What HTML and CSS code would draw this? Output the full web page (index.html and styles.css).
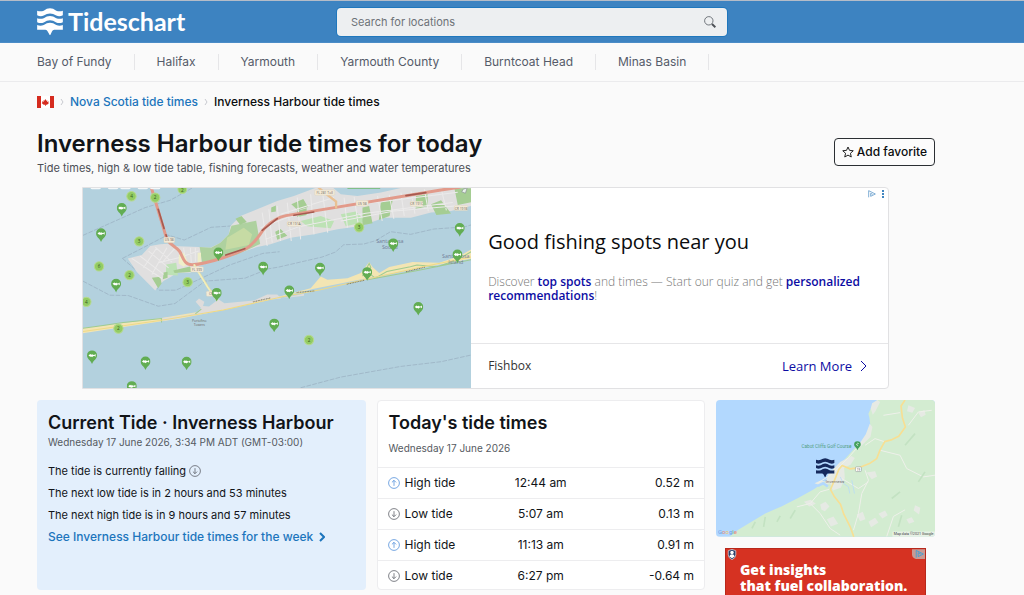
FILE: index.html
```html
<!DOCTYPE html>
<html lang="en">
<head>
    <meta charset="UTF-8">
    <meta name="viewport" content="width=device-width, initial-scale=1.0">
    <title>Inverness Harbour tide times for today</title>
    <link rel="stylesheet" href="styles.css">
</head>
<body>
    <!-- shared icons -->
    <svg class="symbols" aria-hidden="true">
        <symbol id="waves" viewBox="0 0 78 82">
            <path d="M0 8q10 4 20 0Q39-6 58 8q10 4 20 0v14q-10 5-20 1-19-13-38 0-10 4-20-1z"/>
            <path d="M0 31q10 4 20 0 19-14 38 0 10 4 20 0v12q-10 5-20 1-19-13-38 0-10 4-20-1z"/>
            <path d="M0 52q10 4 20 0 19-14 38 0 10 4 20 0v14H52q-5 0-7 5l-5 11h-2l-6-11q-2-5-7-5H0z"/>
        </symbol>
        <symbol id="up" viewBox="0 0 16 16">
            <circle cx="8" cy="8" r="7.2"/>
            <path d="M8 11.8V4.6M5.2 7.2L8 4.4l2.8 2.8"/>
        </symbol>
        <symbol id="down" viewBox="0 0 16 16">
            <circle cx="8" cy="8" r="7.2"/>
            <path d="M8 4.2v7.2M5.2 8.8L8 11.6l2.8-2.8"/>
        </symbol>
        <symbol id="spot" viewBox="-14 -19 28 42">
            <path fill="#62ad53" d="M0 21C-4 10-14 7-14-3a14 14 0 0 1 28 0C14 7 4 10 0 21z"/>
            <path fill="#fff" d="M-10-3l5-4q2 2 4 2l1-2 2 2 4 1 4-3v8l-4-3-4 2-2 2-2-2q-2 0-3 1z"/>
        </symbol>
        <symbol id="adchoices" viewBox="0 0 24 24">
            <path d="M2 2v20M2 2l20 10L8 19v-9l6 3"/>
        </symbol>
    </svg>

    <header class="header">
        <a class="logo" href="#">
            <svg class="logo-icon" aria-hidden="true"><use href="#waves"/></svg>
            <span>Tideschart</span>
        </a>
        <form class="search">
            <input type="search" placeholder="Search for locations" aria-label="Search for locations">
            <button type="submit" aria-label="Search">
                <svg viewBox="0 0 12 12" aria-hidden="true"><circle cx="4.8" cy="4.8" r="4.2"/><path class="handle" d="M8 8l3.4 3.2"/></svg>
            </button>
        </form>
    </header>

    <nav class="places">
        <a href="#">Bay of Fundy</a>
        <a href="#">Halifax</a>
        <a href="#">Yarmouth</a>
        <a href="#">Yarmouth County</a>
        <a href="#">Burntcoat Head</a>
        <a href="#">Minas Basin</a>
    </nav>

    <main class="page">
        <nav class="breadcrumb" aria-label="Breadcrumb">
            <a href="#" aria-label="Canada">
                <svg class="flag" viewBox="0 0 51 36" aria-hidden="true">
                    <path fill="#fff" d="M0 0h51v36H0z"/>
                    <path fill="#d52b1e" d="M0 0h12v36H0zM39 0h12v36H39zM25 9l3 5 3-1-1 5 5-2-1 4 2 1-6 5h-4v4h-2v-4h-4l-6-5 2-1-1-4 5 2-1-5 3 1z"/>
                </svg>
            </a>
            <svg class="sep" viewBox="0 0 4 8" aria-hidden="true"><path d="M1 1l2 3-2 3"/></svg>
            <a href="#">Nova Scotia tide times</a>
            <svg class="sep" viewBox="0 0 4 8" aria-hidden="true"><path d="M1 1l2 3-2 3"/></svg>
            <span>Inverness Harbour tide times</span>
        </nav>

        <div class="title-row">
            <div>
                <h1>Inverness Harbour tide times for today</h1>
                <p class="subtitle">Tide times, high &amp; low tide table, fishing forecasts, weather and water temperatures</p>
            </div>
            <button class="favorite" type="button">
                <svg viewBox="0 0 24 24" aria-hidden="true"><path d="M12 2l3 6.700 7.500.8-5.600 5 1.600 7.500L12 18.200 5.500 22l1.600-7.500-5.600-5L9 8.700z"/></svg>
                Add favorite
            </button>
        </div>

        <section class="fish-ad">
            <svg class="fish-map" viewBox="9 9 1161 603" preserveAspectRatio="xMidYMid slice" role="img" aria-label="Map of fishing spots">
                <path fill="#b3d1de" d="M9 9h1161v603H9z"/>
                <g class="boundary">
                    <path d="M9 153L195 70 270 48 340 9M9 290l80 42 55 1 90 32 50-8 90-67 120-9 70-28 30-5 130-30 40-15 25-22 60-2 35-10 45-27 60 8 70-16 90-6 51-15M660 609l120-32 180-32 120-14 90-20"/>
                    <path d="M127 222l110 95 50 0 160-75 100-35 50-5M127 222l135-70 50 15 80-38 60-4"/>
                </g>
                <!-- mainland -->
                <path fill="#e0dfdf" d="M143 222l42-10 25-27 30-5 22-2 13 7 80 3 35 2 30-15 25-25 5-25 30-30 50-20 60-25 50-15 40-15 30-11h45l25 21 50 5 70-10 70-16h200v56l-60 15-60 5-60 15h-80l-70 25-70 10-70 15-70 10-60 20-40 8-90 30-80 25-30 22h-40l-20 13-18 10-17 15-10 15-20-20-35-35z"/>
                <path fill="#aed19f" d="M358 188l34 2 28-15 25-25 8-26 74-15 12 70-69 31-104 30z"/>
                <path fill="#c6dba4" d="M440 160l50-30 25 20-10 32-70 14z"/>
                <path fill="#bde2b5" d="M258 240l30-5 5 38-36-2zM660 110l60-15 40 15-10 22-70-6zM780 90l45-8 30 30-60 14z"/>
                <path fill="#a5cd93" d="M215 280l25-3 4 20-10 14zM250 264l12-2v18l-14 4zM279 258l50-12 8 16-30 2-24 2zM465 103l18-8 16 18-20 8zM572 70l14-6v18l-14 2zM584 142l16-8 20 20-30 12zM632 60l36-16 14 24-30 10zM650 80l28-8v20l-28 6zM845 70l20-5 10 52-30 6zM900 55l36-10-10 50-32 12zM1005 35l35-5v36l-36 8zM1050 60l30-12 30 40-44 4zM1120 12h50v42l-40 8z"/>
                <g class="streets">
                    <path d="M155 222l90 60M180 215l70 55M205 200l60 50M225 188l50 45M190 250l40-60M215 270l45-80M245 235l45-50M310 190l5 40M330 190l3 45M345 190v42M235 235l60-15 60-20"/>
                    <path d="M545 85l15 100M565 75l10 100M590 65l10 105M620 55l12 115M650 40l10 125M690 30l10 120M725 20l16 125M790 40l10 90M820 38l12 80M890 35l14 75M925 32l14 72M960 25l10 70M990 20l12 68M1030 15l12 66M1080 12l16 66M540 130l80-30 150-36 120-10 240-30M555 165l100-38 200-40 260-32M600 90l160-50M780 110l160-30 200-16"/>
                </g>
                <path fill="#efefc9" d="M296 210l14-5 14 32-14 10-15-10zM352 205h10v34h-10z"/>
                <g fill="none" stroke-linecap="round">
                    <path stroke="#e29a8a" stroke-width="9" d="M213 9l45 150c10 25 30 26 40 42s12 40 38 40c50-3 130-33 160-48s40-45 60-65 40-30 60-34L1075 18l60-9"/>
                    <path stroke="#a65a50" stroke-width="5" stroke-dasharray="60 20" d="M234 75l25 82M436 212l60-20M545 138l45-35M640 93l60-10M975 34l60-9"/>
                    <path stroke="#e9c193" stroke-width="7" d="M712 9l18 15 36 28v18"/>
                    <path stroke="#f3efb8" stroke-width="6" d="M342 242l40 65 42 60"/>
                    <path stroke="#c7c29b" d="M345 242l40 65 42 60"/>
                </g>
                <!-- barrier island -->
                <path fill="#f3e5b3" d="M9 430L130 415 240 401 370 379 430 361 540 349 600 335 690 311 720 276 740 286 800 281 840 266 865 233 875 248 895 266 925 248 995 233 1075 235 1135 215 1170 195V223L1020 251 850 283 700 313 550 350 430 376 300 402 240 411 120 429 9 446z"/>
                <path fill="#dedcdb" d="M246 400L320 392 350 384 362 370 346 352 356 342 372 352 368 364 386 366 414 344 432 356 520 348 560 330 590 330 602 342 670 328V334L550 348 430 374 300 400 246 409z"/>
                <path fill="none" stroke="#9ecb91" stroke-width="3" d="M9 431l60-8 60-9 115-12v12M345 388l18-14M845 275l20-38 5 12-12 12 25 20 35-20 70-14 20-5 60 5 60-20 42-25M860 286l150-28 160-32"/>
                <path fill="none" stroke="#eed987" stroke-width="3" d="M9 441l230-33 190-32 170-38 120-22 130-30 180-40 141-28"/>
                <path fill="none" stroke="#817b5c" stroke-width="3" stroke-dasharray="3 2" d="M517 352l54-12M648 324l54-5M798 299l54-12M975 262l58-14"/>
                <g class="map-labels">
                    <rect class="tag" x="251" y="159" width="32" height="16" rx="3"/><text x="267" y="171">US 98</text>
                    <rect class="tag" x="331" y="247" width="38" height="16" rx="3"/><text x="350" y="259">FL 399</text>
                    <rect class="tag" x="378" y="320" width="32" height="15" rx="3"/><text x="392" y="332">CR</text>
                    <rect class="tag" x="702" y="17" width="60" height="16" rx="3"/><text x="732" y="30">FL 281 Toll</text>
                    <rect class="tag" x="826" y="49" width="36" height="16" rx="3"/><text x="844" y="61">US 98</text>
                    <rect class="tag" x="620" y="111" width="42" height="15" rx="3"/><text x="641" y="123">CR 191A</text>
                    <rect class="tag" x="988" y="51" width="38" height="15" rx="3"/><text x="1007" y="63">CR 191C</text>
                    <rect class="tag" x="1120" y="64" width="40" height="15" rx="3"/><text x="1140" y="76">CR 191B</text>
                    <text x="357" y="412">Portofino</text><text x="357" y="424">Towers</text>
                </g>
                <g class="map-names">
                    <text x="927" y="176">Santa Rosa</text><text x="927" y="194">Sound</text>
                    <text x="1124" y="222">Santa Rosa</text><text x="1124" y="238">Island</text>
                </g>
                <path fill="#4fae35" d="M800 9h98v4h-98z"/>
                <path fill="#f5f8f9" d="M31 9h32q0 6-6 6H37q-6 0-6-6zM83 9h32q0 6-6 6H89q-6 0-6-6zM120 9h32q0 6-6 6h-20q-6 0-6-6zM172 9h32q0 6-6 6h-20q-6 0-6-6zM209 9h32q0 6-6 6h-20q-6 0-6-6z"/>
                <g class="clusters">
                    <circle cx="154" cy="36" r="14"/><circle cx="225" cy="40" r="14"/><circle cx="306" cy="15" r="13"/>
                    <circle cx="177" cy="171" r="14"/><circle cx="57" cy="246" r="14"/><circle cx="148" cy="272" r="14"/>
                    <circle cx="322" cy="293" r="14"/><circle cx="19" cy="352" r="14"/><circle cx="115" cy="432" r="14"/>
                    <circle cx="835" cy="129" r="14"/><circle cx="685" cy="466" r="14"/>
                    <text x="154" y="41">4</text><text x="225" y="45">2</text><text x="306" y="23">2</text>
                    <text x="177" y="176">3</text><text x="57" y="251">6</text><text x="148" y="277">2</text>
                    <text x="322" y="298">3</text><text x="19" y="357">4</text><text x="115" y="437">2</text>
                    <text x="835" y="134">3</text><text x="685" y="471">2</text>
                </g>
                <g>
                    <use href="#spot" x="110" y="54" width="30" height="45"/>
                    <use href="#spot" x="48" y="130" width="30" height="45"/>
                    <use href="#spot" x="399" y="187" width="30" height="45"/>
                    <use href="#spot" x="533" y="230" width="30" height="45"/>
                    <use href="#spot" x="93" y="281" width="30" height="45"/>
                    <use href="#spot" x="394" y="308" width="30" height="45"/>
                    <use href="#spot" x="566" y="400" width="30" height="45"/>
                    <use href="#spot" x="21" y="495" width="30" height="45"/>
                    <use href="#spot" x="181" y="513" width="30" height="45"/>
                    <use href="#spot" x="304" y="514" width="30" height="45"/>
                    <use href="#spot" x="140" y="587" width="30" height="45"/>
                    <use href="#spot" x="611" y="301" width="30" height="45"/>
                    <use href="#spot" x="703" y="233" width="30" height="45"/>
                    <use href="#spot" x="844" y="246" width="30" height="45"/>
                    <use href="#spot" x="922" y="160" width="30" height="45"/>
                    <use href="#spot" x="1121" y="114" width="30" height="45"/>
                    <use href="#spot" x="1114" y="193" width="30" height="45"/>
                    <use href="#spot" x="997" y="350" width="30" height="45"/>
                </g>
                <path fill="#e8f1ea" stroke="#8a9096" stroke-width="2" d="M1146 15l12-4-5 16-11-4z"/>
            </svg>
            <div class="fish-text">
                <div class="ad-marks">
                    <svg class="ad-icon" aria-hidden="true"><use href="#adchoices"/></svg>
                    <svg class="ad-dots" viewBox="0 0 2 8" aria-hidden="true"><path d="M0 0h2v2H0zM0 3h2v2H0zM0 6h2v2H0z"/></svg>
                </div>
                <div class="fish-copy">
                    <h2>Good fishing spots near you</h2>
                    <p>Discover <a href="#">top spots</a> and times — Start our quiz and get <a href="#">personalized recommendations</a>!</p>
                </div>
                <div class="fish-foot">
                    <span>Fishbox</span>
                    <a href="#">Learn More
                        <svg viewBox="0 0 8 12" aria-hidden="true"><path d="M1 1l5 5-5 5"/></svg>
                    </a>
                </div>
            </div>
        </section>

        <div class="columns">
            <section class="card current">
                <h2>Current Tide · Inverness Harbour</h2>
                <p class="date">Wednesday 17 June 2026, 3:34 PM ADT (GMT-03:00)</p>
                <p>The tide is currently falling <svg class="tide-icon" aria-hidden="true"><use href="#down"/></svg></p>
                <p>The next low tide is in 2 hours and 53 minutes</p>
                <p>The next high tide is in 9 hours and 57 minutes</p>
                <a class="more" href="#">See Inverness Harbour tide times for the week
                    <svg viewBox="0 0 6 10" aria-hidden="true"><path d="M1 1l4 4-4 4"/></svg>
                </a>
            </section>

            <section class="card today">
                <div class="today-head">
                    <h2>Today's tide times</h2>
                    <p class="date">Wednesday 17 June 2026</p>
                </div>
                <table>
                    <tbody>
                        <tr>
                            <td><svg class="tide-icon high" aria-hidden="true"><use href="#up"/></svg>High tide</td>
                            <td>12:44 am</td>
                            <td>0.52 m</td>
                        </tr>
                        <tr>
                            <td><svg class="tide-icon" aria-hidden="true"><use href="#down"/></svg>Low tide</td>
                            <td>5:07 am</td>
                            <td>0.13 m</td>
                        </tr>
                        <tr>
                            <td><svg class="tide-icon high" aria-hidden="true"><use href="#up"/></svg>High tide</td>
                            <td>11:13 am</td>
                            <td>0.91 m</td>
                        </tr>
                        <tr>
                            <td><svg class="tide-icon" aria-hidden="true"><use href="#down"/></svg>Low tide</td>
                            <td>6:27 pm</td>
                            <td>-0.64 m</td>
                        </tr>
                    </tbody>
                </table>
            </section>

            <aside class="side">
                <svg class="area-map" viewBox="32 14 658 411" role="img" aria-label="Map of Inverness">
                    <path fill="#b2d8fe" d="M32 14h658v411H32z"/>
                    <path fill="#d3ecd1" d="M517 14h173v411H72l28-22 30-18 50-30 50-22 50-25 45-25 30-20 34-20 20-40 40-45 30-30 18-25-4-36-3-12 10-22z"/>
                    <g fill="#e6eae4">
                        <path d="M497 40l4-16 16-10 8 6-14 28-8 10zM494 85l8 10-6 30-20 20-10 10-4-8 20-30zM405 200l34-18 10 6-12 20-20 10 2 30-12 30-24 8-8-22-16 4 10-30zM328 264l18-8 14 2-16 12zM296 320l20-6 16 12-20 8zM345 328l16-8 12 14-14 14-10-4zM484 232l26-4 6 16-16 8zM455 358l18-8 8 22-16 6zM490 380l20-12 10 14-22 14zM520 356l20-10 8 14-16 10zM365 372l20-8 14 22-22 8zM630 330l16 8-4 20-16-12zM640 52l18-8 4 14-14 8zM610 30l20 8-8 14-16-4zM604 372l16-6 8 14-16 6z"/>
                    </g>
                    <g fill="none" stroke="#eef0ea" stroke-width="3">
                        <path d="M340 262l40-25 50-50 40-45M275 335l40-10 30-35 28-8M315 325l30 30 30 45 30 20M540 140l-30-10-30 20M525 165l60 15 20 40 50 25 35-5M480 225l10 30-20 40-10 60-15 50M410 250l50 30 30-20M545 424l20-60 35-20M610 90l30-40 40-5M535 60l50-8"/>
                    </g>
                    <path fill="none" stroke="#c3e2c2" stroke-width="5" d="M140 400l10-20M175 395l5-30M215 380l10-18M255 370l15-25M600 150l30-35M560 310l25-20M640 260l20-30M580 395l10-35"/>
                    <path fill="none" stroke="#b2d8fe" stroke-width="8" d="M338 272l16-8 14 10"/>
                    <path fill="none" stroke="#b2d8fe" stroke-width="2" d="M405 245l10 20 15 10 4 20M440 255l8 40"/>
                    <path fill="none" stroke="#f7df93" stroke-width="5" stroke-linejoin="round" d="M600 14l-12 18 4 35 9 28-20 28-20 10-22 6-14 25-10 26-22 15-30 12-28 4-24-10-10 12-10 25-15 35 12 22 18 22 10 30 20 40 10 28"/>
                    <rect x="451" y="215" width="18" height="14" rx="3" fill="#fff" stroke="#9aa5a0" stroke-width="2"/>
                    <text class="road" x="460" y="226">19</text>
                    <text class="golf" x="289" y="158">Cabot Cliffs Golf Course</text>
                    <path fill="#42a05a" d="M457 165c-3-9-10-10-10-17a10 10 0 0 1 20 0c0 7-7 8-10 17z"/>
                    <path fill="none" stroke="#fff" stroke-width="2" d="M461 145q-4-3-6 1t4 5"/>
                    <text class="town" x="362" y="262">Inverness</text>
                    <use href="#waves" x="330" y="188" width="60" height="58" fill="#15295c"/>
                    <text class="google" x="38" y="418"><tspan fill="#6f9fe8">G</tspan><tspan fill="#e8867d">o</tspan><tspan fill="#efc65c">o</tspan><tspan fill="#6f9fe8">g</tspan><tspan fill="#7bbf86">l</tspan><tspan fill="#e8867d">e</tspan></text>
                    <path fill="#f0f3ee" opacity=".7" d="M562 409h128v16H562z"/>
                    <text class="credit" x="566" y="421">Map data ©2021 Google</text>
                </svg>
                <a class="red-ad" href="#">
                    <svg class="shield" viewBox="0 0 26 32" aria-hidden="true">
                        <path fill="#29406b" stroke="#dfe3ea" stroke-width="2" d="M13 1l11 4v12q0 9-11 14Q2 26 2 17V5z"/>
                        <circle cx="13" cy="10" r="5" fill="#fff"/>
                        <path fill="#fff" d="M5 22q2-7 8-7t8 7l-8 5z"/>
                    </svg>
                    <span class="red-copy">Get insights<br>that fuel collaboration.</span>
                    <svg class="red-choices" viewBox="0 0 40 30" aria-hidden="true">
                        <path fill="#c99a94" d="M0 0h40v30H12Q0 28 0 16z"/>
                        <path fill="none" stroke="#4aa0d0" stroke-width="3" d="M13 4v22M13 4l22 11-16 8v-12l8 4"/>
                    </svg>
                </a>
            </aside>
        </div>
    </main>
</body>
</html>
```
FILE: styles.css
```css
* {
    box-sizing: border-box;
}
body {
    margin: 0;
    background: #fafafa;
    color: #111418;
    font-family: Inter, "Liberation Sans", sans-serif;
    font-size: 12px;
    line-height: 16px;
}
h1, h2, p {
    margin: 0;
}
a {
    color: #1c75bc;
    text-decoration: none;
}
svg {
    display: block;
}
.symbols {
    display: none;
}

/* header */
.header {
    display: grid;
    grid-template-columns: 300px 390px;
    align-items: center;
    height: 43px;
    padding: 0 37px;
    background: #3d83c1;
    border-top: 1px solid #b5bcc8;
    border-bottom: 1px solid #4b8cc7;
}
.logo {
    display: flex;
    align-items: center;
    gap: 5px;
    color: #fff;
    font-family: Lato, sans-serif;
    font-size: 25px;
    font-weight: 700;
    line-height: 28px;
}
.logo span {
    padding-bottom: 2px;
}
.logo-icon {
    width: 26px;
    height: 27px;
    fill: #fff;
}
.search {
    display: flex;
    align-items: center;
    height: 28px;
    padding: 0 11px 0 14px;
    background: #edeff1;
    border-radius: 4px;
    box-shadow: 0 0 0 1px #1f77bd;
}
.search input {
    flex: 1;
    padding: 0;
    border: none;
    outline: none;
    background: none;
    font-family: inherit;
    font-size: 11px;
}
.search input::placeholder {
    color: #6d7278;
}
.search button {
    padding: 0;
    border: none;
    background: none;
    cursor: pointer;
}
.search svg {
    width: 12px;
    height: 12px;
    fill: none;
    stroke: #70757b;
}
.search .handle {
    stroke: #4c5056;
    stroke-width: 2;
}

/* nearby places */
.places {
    display: flex;
    align-items: center;
    height: 39px;
    padding: 0 37px;
    border-bottom: 1px solid #ebebed;
}
.places a {
    padding: 0 22px;
    border-right: 1px solid #e6e6e8;
    color: #555b69;
}
.places a:first-child {
    padding-left: 0;
}

.page {
    padding: 0 89px 0 37px;
}
.breadcrumb {
    display: flex;
    align-items: center;
    gap: 6px;
    height: 40px;
    color: #0b0c0e;
    font-weight: 500;
}
.flag {
    width: 17px;
    height: 12px;
}
.sep {
    width: 4px;
    height: 8px;
    fill: none;
    stroke: #c8cad0;
}
.title-row {
    display: flex;
    justify-content: space-between;
    align-items: center;
    height: 65px;
    padding-bottom: 6px;
}
h1 {
    font-size: 24px;
    font-weight: 600;
    line-height: 32px;
}
.subtitle {
    color: #4b4f56;
    font-size: 11px;
}
.favorite {
    display: flex;
    align-items: center;
    gap: 3px;
    height: 28px;
    padding: 0 7px;
    border: 1px solid #2b2f33;
    border-radius: 4px;
    background: #fcfcfc;
    color: #0b0c0e;
    font: 500 12px/16px Inter, sans-serif;
    cursor: pointer;
}
.favorite svg {
    width: 12px;
    height: 12px;
    fill: none;
    stroke: #222;
    stroke-width: 2;
}

/* fishing ad */
.fish-ad {
    display: grid;
    grid-template-columns: 27fr 29fr;
    height: 202px;
    margin: 0 46px 11px 45px;
    overflow: hidden;
    background: #fff;
    border: 1px solid #e1e1e3;
    border-radius: 0 4px 4px 0;
    font-family: "Open Sans", sans-serif;
}
.fish-map {
    width: 100%;
    height: 200px;
}
.boundary {
    fill: none;
    stroke: #98adbf;
    stroke-width: 2;
    stroke-dasharray: 14 4;
}
.streets {
    fill: none;
    stroke: #ebeaea;
    stroke-width: 3;
}
.tag {
    fill: #f3ead7;
    stroke: #d9cdb4;
}
.map-labels text {
    fill: #6e675f;
    font-size: 10px;
    text-anchor: middle;
}
.map-names text {
    fill: #707c96;
    font-size: 16px;
    text-anchor: middle;
}
.clusters circle {
    fill: #93cc63;
    stroke: #b5d98f;
    stroke-width: 3;
}
.clusters text {
    fill: #35581e;
    font-size: 14px;
    text-anchor: middle;
}
.fish-text {
    display: flex;
    flex-direction: column;
}
.ad-marks {
    display: flex;
    justify-content: flex-end;
    align-items: center;
    gap: 6px;
    height: 11px;
    padding-right: 4px;
}
.ad-icon {
    width: 8px;
    height: 8px;
    fill: none;
    stroke: #4286c0;
    stroke-width: 2;
}
.ad-dots {
    width: 2px;
    height: 8px;
    fill: #4286c0;
}
.fish-copy {
    flex: 1;
    padding: 29px 24px 0 17px;
}
.fish-copy h2 {
    margin-bottom: 19px;
    color: #0b0c0e;
    font-size: 20px;
    font-weight: 400;
    line-height: 28px;
}
.fish-copy p {
    color: #777;
    font-weight: 300;
    line-height: 14px;
}
.fish-copy a {
    color: #0c0ca3;
    font-weight: 600;
}
.fish-foot {
    display: flex;
    justify-content: space-between;
    align-items: center;
    height: 45px;
    padding: 0 20px 0 17px;
    border-top: 1px solid #e6e6e8;
    color: #333;
}
.fish-foot a {
    display: flex;
    align-items: center;
    gap: 8px;
    color: #0c0ca3;
    font-size: 13px;
}
.fish-foot svg {
    width: 8px;
    height: 12px;
    fill: none;
    stroke: #0c0ca3;
}

/* columns */
.columns {
    display: grid;
    grid-template-columns: minmax(0, 3fr) minmax(0, 3fr) minmax(0, 2fr);
    gap: 11px;
}
.card {
    height: 190px;
    border-radius: 4px;
}
.card h2 {
    font-size: 18px;
    font-weight: 600;
    line-height: 24px;
}
.card .date {
    color: #555a61;
    font-size: 10px;
}
.current {
    padding: 11px;
    background: #e3effc;
}
.current .date {
    margin: -1px 0 13px;
}
.current p {
    margin-bottom: 6px;
    font-size: 11px;
}
.tide-icon {
    display: inline-block;
    width: 12px;
    height: 12px;
    overflow: visible;
    vertical-align: -2px;
    fill: none;
    stroke: #555a61;
    stroke-width: 1;
}
.tide-icon.high {
    stroke: #4b8bd8;
}
.more {
    display: flex;
    align-items: center;
    gap: 6px;
    font-weight: 500;
}
.more svg {
    width: 6px;
    height: 10px;
    fill: none;
    stroke: #1c75bc;
    stroke-width: 2;
}
.today {
    background: #fff;
    border: 1px solid #ededef;
}
.today-head {
    height: 66px;
    padding: 10px 11px;
}
.today-head h2 {
    margin-bottom: 5px;
}
.today table {
    width: 100%;
    border-collapse: collapse;
    table-layout: fixed;
}
.today td {
    height: 31px;
    padding: 0 10px;
    border-top: 1px solid #ededef;
    text-align: center;
}
.today td:first-child {
    text-align: left;
}
.today td:last-child {
    text-align: right;
}
.today .tide-icon {
    margin-right: 5px;
}

/* side column */
.area-map {
    width: 100%;
    border-radius: 4px;
}
.area-map text {
    font-family: Roboto, sans-serif;
    font-size: 13px;
}
.area-map .road {
    fill: #555;
    font-size: 9px;
    text-anchor: middle;
}
.area-map .golf {
    fill: #51a081;
    font-size: 14px;
}
.area-map .town {
    fill: #77736f;
}
.area-map .google {
    font-size: 18px;
}
.area-map .credit {
    fill: #444;
    font-size: 11px;
}
.red-ad {
    display: grid;
    grid-template-columns: 14px 1fr 13px;
    height: 47px;
    margin: 11px 9px 0;
    overflow: hidden;
    background: #d63222;
    border: 1px solid #b8281b;
    border-bottom: none;
    color: #fff;
}
.shield {
    width: 10px;
    height: 11px;
    margin-left: 1px;
}
.red-copy {
    padding-top: 13px;
    font-family: "Open Sans", sans-serif;
    font-size: 14px;
    font-weight: 800;
    line-height: 16px;
    white-space: nowrap;
}
.red-choices {
    width: 13px;
    height: 10px;
    justify-self: end;
}
```
